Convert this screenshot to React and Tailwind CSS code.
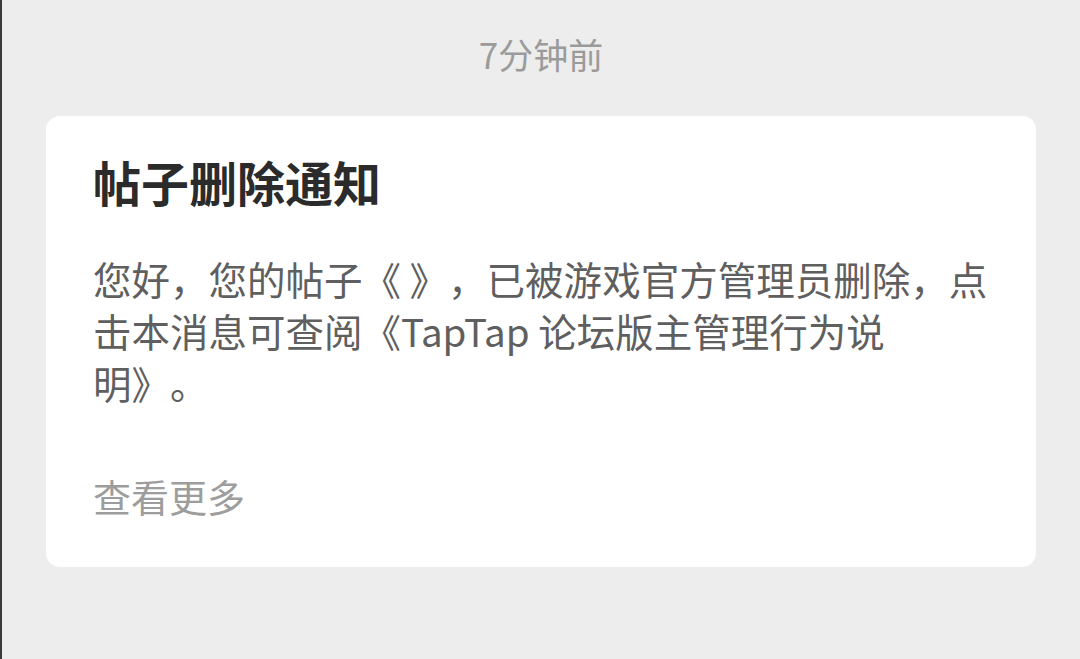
// Notice card — post deletion message in a chat-like list

const FONT = { fontFamily: '"Noto Sans CJK SC", "Noto Sans", sans-serif' }

export default function App() {
    return (
        <div className="w-[1080px] h-[659px] bg-[#ededed] border-l-2 border-[#3a3a3a] overflow-hidden [text-spacing-trim:space-all]" style={FONT}>

            {/* ── Timestamp ── */}
            <div className="pt-[29px] h-[81px] text-center text-[35px] leading-[50px] text-[#9b9b9b]">
                7分钟前
            </div>

            {/* ── Card ── */}
            <div className="mt-[35px] ml-[44px] w-[990px] bg-white rounded-[14px] pt-[37px] pb-[45px] pl-[47px] pr-[47px]">
                <h1 className="text-[48px] leading-[56px] font-bold text-[#2b2b2b]">
                    帖子删除通知
                </h1>

                <p className="mt-[43px] text-[38.5px] leading-[52px] text-[#5f5f5f] whitespace-nowrap">
                    <span className="block">您好，您的帖子《 》，已被游戏官方管理员删除，点</span>
                    <span className="block">击本消息可查阅《TapTap 论坛版主管理行为说</span>
                    <span className="block">明》。</span>
                </p>

                <p className="mt-[62px] text-[38px] leading-[52px] text-[#9d9d9d]">
                    查看更多
                </p>
            </div>

        </div>
    )
}
